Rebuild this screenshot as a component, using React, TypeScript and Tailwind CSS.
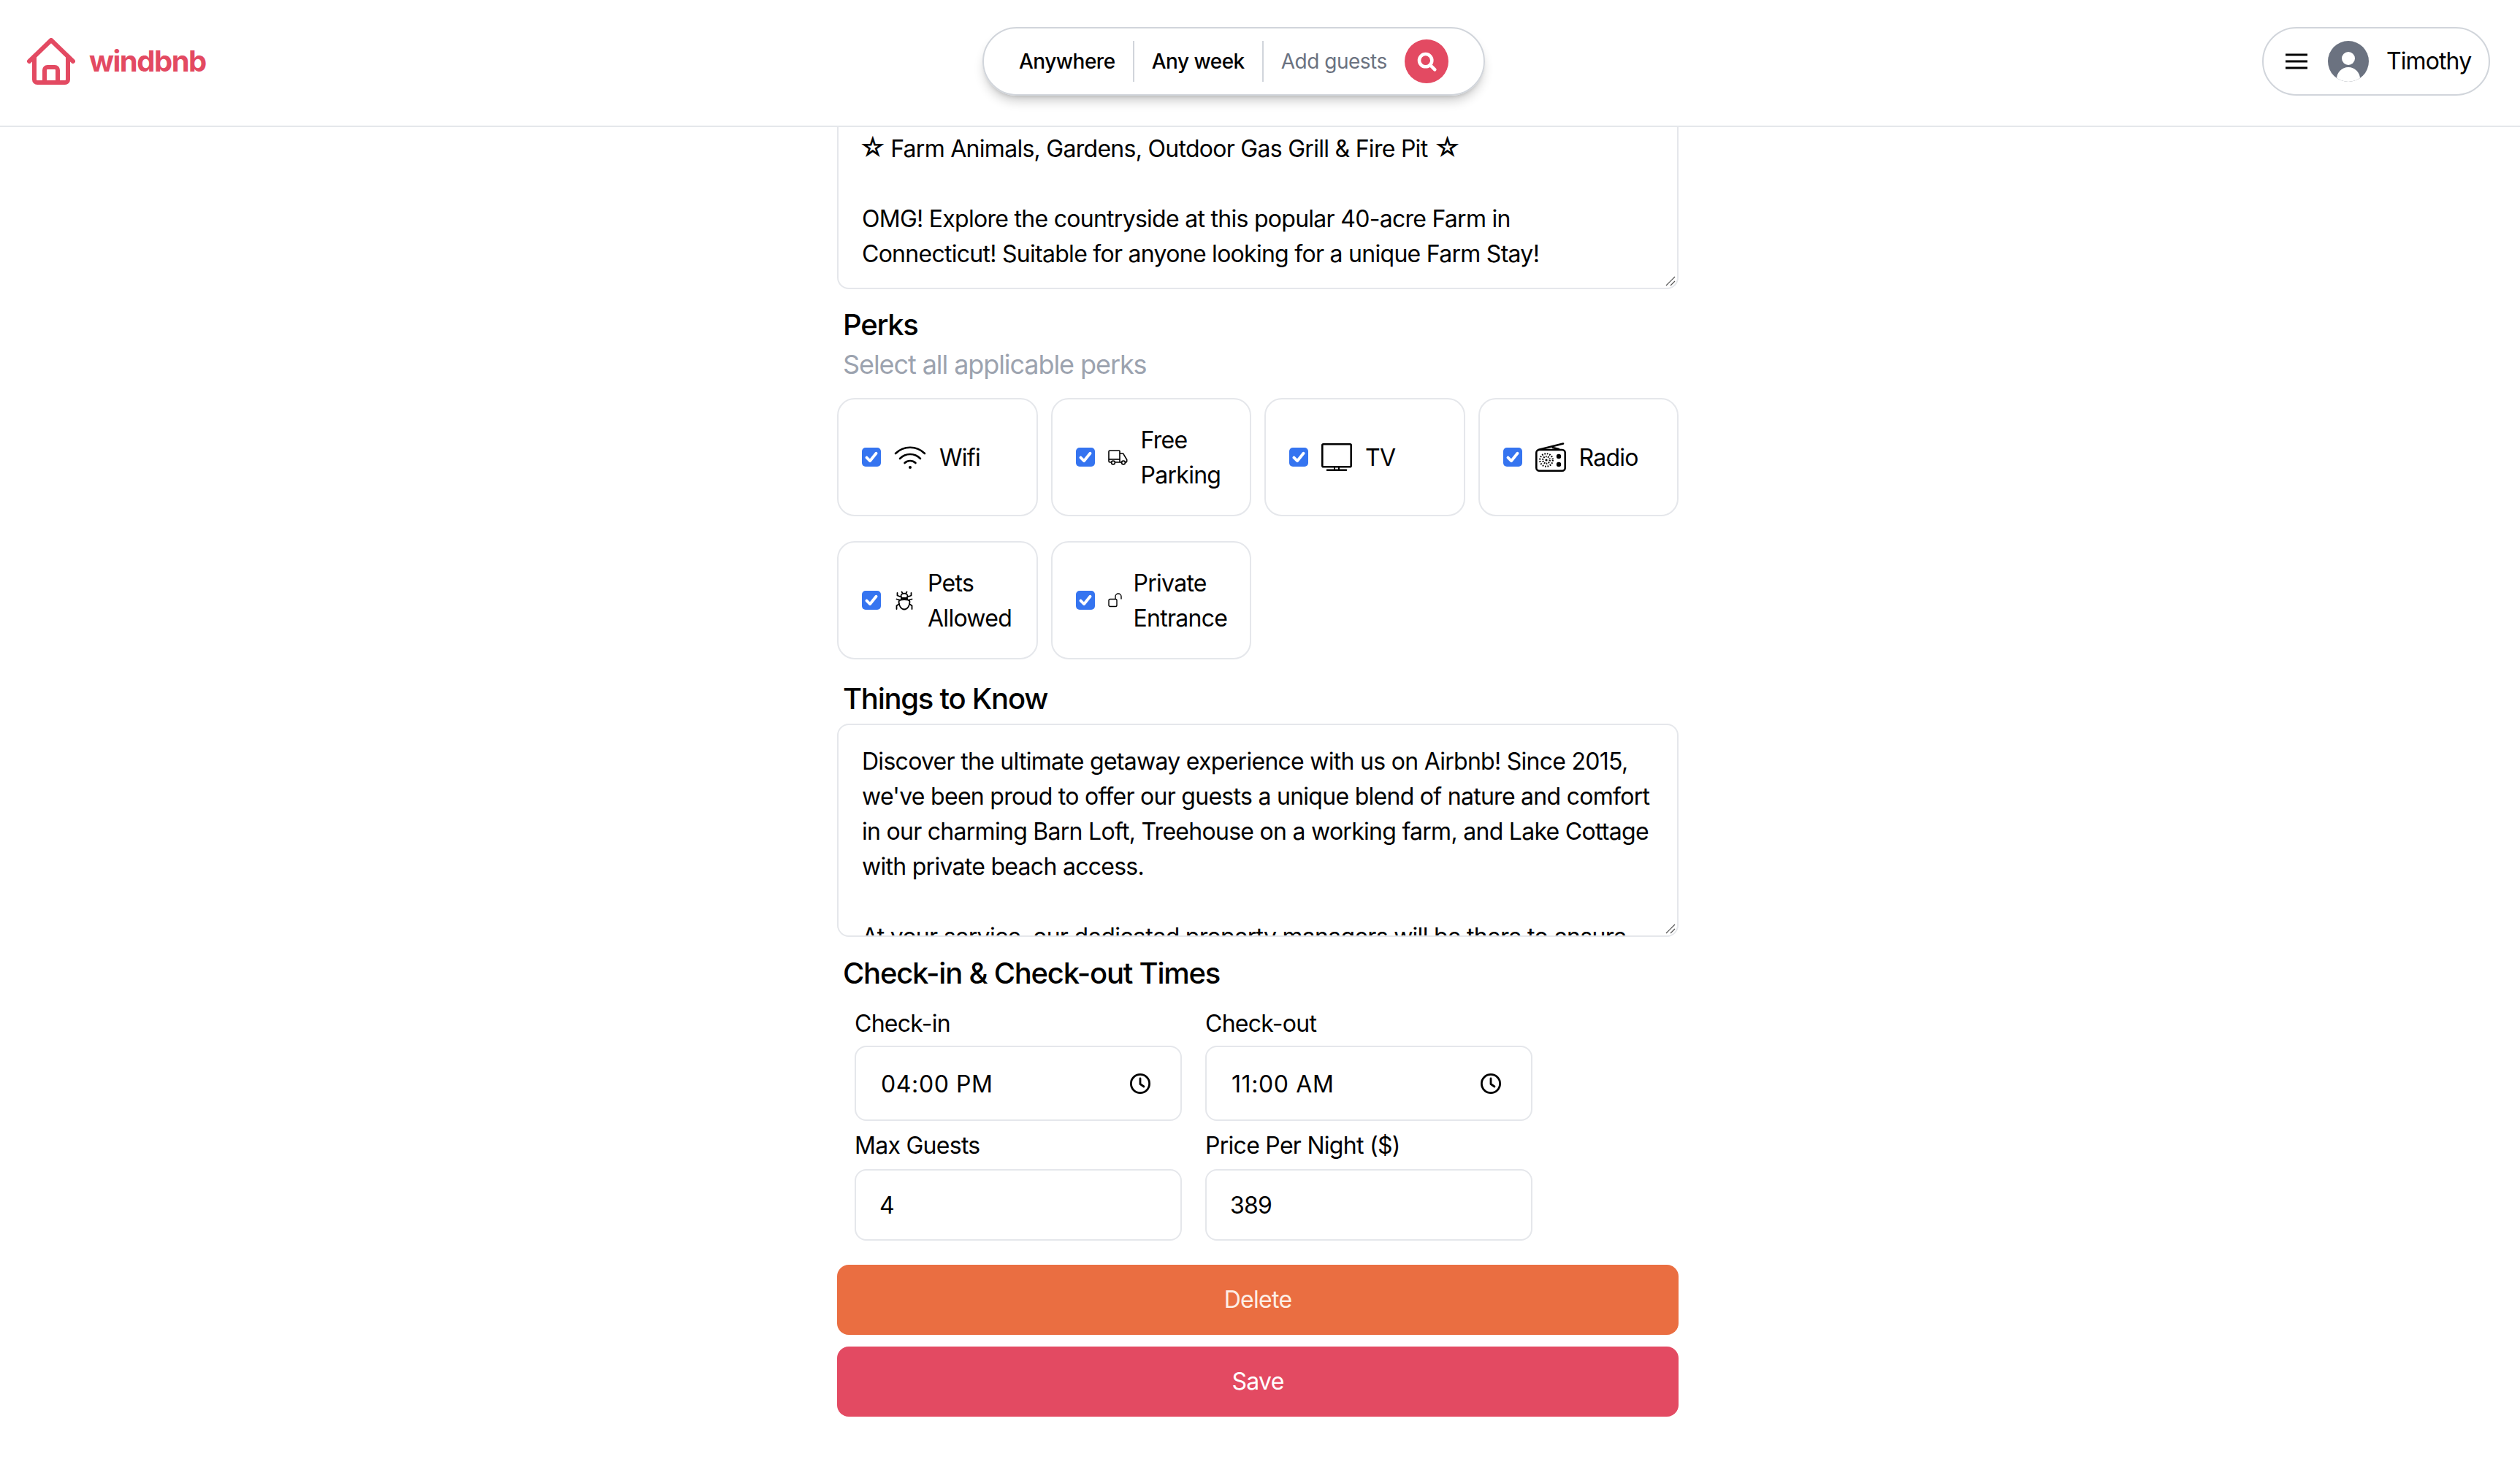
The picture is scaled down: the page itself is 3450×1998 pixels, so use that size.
const font = "font-['Inter',sans-serif]";

function HouseLogo() {
  return (
    <svg viewBox="0 0 66 64" className="w-[66px] h-[64px]" fill="none" stroke="#e34a62" strokeWidth="6" strokeLinecap="round" strokeLinejoin="round">
      <path d="M3 32 L33 3 L63 32" />
      <path d="M10 26 V57 a4 4 0 0 0 4 4 H52 a4 4 0 0 0 4 -4 V26" />
      <path d="M24 60 V44 a4 4 0 0 1 4 -4 H38 a4 4 0 0 1 4 4 V60" />
    </svg>
  );
}

function WifiIcon() {
  return (
    <svg viewBox="0 0 44 34" className="w-[44px] h-[34px] shrink-0" fill="none" stroke="black" strokeWidth="2.6" strokeLinecap="round">
      <path d="M2 12 C13 1 31 1 42 12" />
      <path d="M8 19 C16 11 28 11 36 19" />
      <path d="M14.5 25 C19 21 25 21 29.5 25" />
      <circle cx="22" cy="31" r="2" fill="black" stroke="none" />
    </svg>
  );
}

function TruckIcon() {
  return (
    <svg viewBox="0 0 27 21" className="w-[27px] h-[21px] shrink-0" fill="none" stroke="black" strokeWidth="1.6" strokeLinejoin="round">
      <path d="M4.5 17 H2.5 a1.5 1.5 0 0 1 -1.5 -1.5 V2.5 A1.5 1.5 0 0 1 2.5 1 H15 a1 1 0 0 1 1 1 V17 H9.5" />
      <path d="M16 5 H20 a1 1 0 0 1 1 .7 L25.7 13.5 V15.5 a1.5 1.5 0 0 1 -1.5 1.5 H23.5 M18.5 17 H16" />
      <path d="M1 13 H16" />
      <circle cx="7" cy="17.5" r="2.4" />
      <circle cx="21" cy="17.5" r="2.4" />
    </svg>
  );
}

function TvIcon() {
  return (
    <svg viewBox="0 0 42 38" className="w-[42px] h-[38px] shrink-0" fill="none" stroke="black" strokeWidth="2.6" strokeLinejoin="round">
      <rect x="1.3" y="1.3" width="39.4" height="31" rx="1.5" />
      <path d="M18 32 V36 M24 32 V36" strokeWidth="2" />
      <path d="M8 36.7 H34" strokeLinecap="round" />
    </svg>
  );
}

function RadioIcon() {
  return (
    <svg viewBox="0 0 42 40" className="w-[42px] h-[40px] shrink-0" fill="none" stroke="black" strokeWidth="2.6" strokeLinejoin="round">
      <rect x="1.3" y="10" width="39.4" height="28.7" rx="4" />
      <path d="M4 10 L38 1.5 M24 7 L32 9" strokeLinecap="round" />
      <circle cx="15" cy="24" r="8.8" strokeWidth="2.2" strokeDasharray="1.7 1.8" />
      <circle cx="15" cy="24" r="4.8" strokeWidth="2.2" strokeDasharray="1.6 1.4" />
      <circle cx="15" cy="24" r="1.6" fill="black" stroke="none" />
      <circle cx="32" cy="19" r="3.2" fill="black" stroke="none" />
      <circle cx="32" cy="30" r="3.2" fill="black" stroke="none" />
    </svg>
  );
}

function BugIcon() {
  return (
    <svg viewBox="0 0 24 27" className="w-[24px] h-[27px] shrink-0" fill="none" stroke="black" strokeWidth="1.8" strokeLinecap="round" strokeLinejoin="round">
      <path d="M4.5 15 C4.5 12.5 8 12 12 12 C16 12 19.5 12.5 19.5 15 C19.5 21 16 25.5 12 25.5 C8 25.5 4.5 21 4.5 15 Z" />
      <path d="M8 12 V10 H16 V12" />
      <ellipse cx="12" cy="7" rx="4.5" ry="3.4" />
      <path d="M8.5 1.5 L10 4 M15.5 1.5 L14 4" />
      <path d="M7.5 8.5 L2.5 6.5 V3 M16.5 8.5 L21.5 6.5 V3" />
      <path d="M5.5 12.5 L1.5 11.5 M18.5 12.5 L22.5 11.5" />
      <path d="M5 18 L1.5 20.5 V25 M19 18 L22.5 20.5 V25" />
    </svg>
  );
}

function LockIcon() {
  return (
    <svg viewBox="0 0 20 20" className="w-[20px] h-[20px] shrink-0" fill="none" stroke="black" strokeWidth="1.4" strokeLinecap="round" strokeLinejoin="round">
      <rect x="1" y="8.5" width="11" height="10" rx="1.8" />
      <path d="M10 8.5 V5 a4 4 0 0 1 8 0 V8" />
    </svg>
  );
}

function ClockIcon() {
  return (
    <svg viewBox="0 0 30 30" className="w-[30px] h-[30px]" fill="none" stroke="black" strokeWidth="2.8" strokeLinecap="round" strokeLinejoin="round">
      <circle cx="15" cy="15" r="12.6" />
      <path d="M15 8 V15.5 L20 19" />
    </svg>
  );
}

function Checkbox() {
  return (
    <span className="w-[26px] h-[26px] shrink-0 rounded-[5px] bg-[#3574f0] flex items-center justify-center">
      <svg viewBox="0 0 16 16" className="w-[26px] h-[26px]" fill="none" stroke="white" strokeWidth="2.4" strokeLinecap="round" strokeLinejoin="round">
        <path d="M4 8.4 L6.8 11.2 L12 4.8" />
      </svg>
    </span>
  );
}

function PerkCard({ icon, label, iconGap = 'ml-[18px]', gap }: { icon: React.ReactNode; label: string; iconGap?: string; gap: string }) {
  return (
    <label className="h-[162px] rounded-[24px] border-2 border-[#e5e7eb] pl-[32px] flex items-center">
      <Checkbox />
      <span className={`${iconGap} flex items-center`}>{icon}</span>
      <span className={`${gap} pt-[2px]`}>{label}</span>
    </label>
  );
}

function Field({ label, value, icon, box }: { label: string; value: string; icon?: boolean; box: string }) {
  return (
    <div className="w-[448px]">
      <div className="h-[48px]">{label}</div>
      <div className={`${box} rounded-[16px] border-2 border-[#e5e7eb] flex items-center justify-between`}>
        <span className="pt-[2px]">{value}</span>
        {icon && <ClockIcon />}
      </div>
    </div>
  );
}

function ResizeGrip() {
  return (
    <svg viewBox="0 0 16 16" className="absolute right-[2px] bottom-[2px] w-[16px] h-[16px]" stroke="#555" strokeWidth="1.2">
      <path d="M3 15 L15 3 M9 15 L15 9" />
    </svg>
  );
}

export default function App() {
  return (
    <div className={`${font} h-[1998px] w-[3450px] overflow-hidden bg-white text-black`}>
      <header className="h-[174px] border-b-2 border-[#e5e7eb] pl-[37px] pr-[41px] pb-[4px] flex items-center justify-between">
        <div className="flex items-center gap-[19px] w-[932px]">
          <HouseLogo />
          <span className="text-[40px] font-bold tracking-[-1.5px] text-[#e34a62]">windbnb</span>
        </div>
        <div className="h-[94px] w-[688px] rounded-full border-2 border-[#d1d5db] shadow-[0_10px_15px_-3px_rgba(0,0,0,0.2),0_4px_6px_-4px_rgba(0,0,0,0.2)] flex items-center pl-[48px] text-[28px] tracking-[-0.5px]">
          <span className="font-medium">Anywhere</span>
          <span className="mx-[24px] h-[56px] w-[2px] bg-[#d1d5db]" />
          <span className="font-medium">Any week</span>
          <span className="mx-[24px] h-[56px] w-[2px] bg-[#d1d5db]" />
          <span className="text-[#6b7280]">Add guests</span>
          <span className="ml-[24px] w-[60px] h-[60px] rounded-full bg-[#e34a62] flex items-center justify-center">
            <svg viewBox="0 0 24 24" className="w-[32px] h-[32px]" fill="none" stroke="white" strokeWidth="3.4" strokeLinecap="round">
              <circle cx="11" cy="11" r="6.5" />
              <path d="M16 16 L20.5 20.5" />
            </svg>
          </span>
        </div>
        <div className="w-[1000px] flex justify-end">
          <div className="h-[94px] w-[312px] rounded-full border-2 border-[#d1d5db] flex items-center pl-[30px]">
            <svg viewBox="0 0 30 24" className="w-[30px] h-[24px]" fill="none" stroke="black" strokeWidth="2.8">
              <path d="M0 3 H30 M0 12 H30 M0 21 H30" />
            </svg>
            <span className="ml-[28px] w-[56px] h-[56px] rounded-full bg-[#6b7280] relative overflow-hidden">
              <span className="absolute left-[19px] top-[15px] w-[18px] h-[18px] rounded-full bg-white" />
              <span className="absolute left-[12px] top-[36px] w-[32px] h-[32px] rounded-full bg-white" />
            </span>
            <span className="ml-[24px] text-[32px] tracking-[-0.9px]">Timothy</span>
          </div>
        </div>
      </header>

      <main className="w-[1152px] ml-[1146px] text-[32px] leading-[48px] tracking-[-0.72px]">
        <div className="relative h-[222px] rounded-b-[16px] border-2 border-t-0 border-[#e5e7eb] pl-[32px] pt-[6px]">
          <div><span className="text-[36px] leading-[36px] -ml-[4px] -mr-[2px]">☆</span> Farm Animals, Gardens, Outdoor Gas Grill &amp; Fire Pit <span className="text-[36px] leading-[36px]">☆</span></div>
          <div className="mt-[48px]">OMG! Explore the countryside at this popular 40-acre Farm in</div>
          <div>Connecticut! Suitable for anyone looking for a unique Farm Stay!</div>
          <ResizeGrip />
        </div>

        <h2 className="mt-[21px] pl-[8px] text-[40px] leading-[56px] font-medium tracking-[-1.25px]">Perks</h2>
        <p className="pl-[8px] text-[#9ca3af] text-[36px] leading-[52px] tracking-[-1.08px]">Select all applicable perks</p>

        <div className="mt-[20px] grid grid-cols-4 gap-x-[18px] gap-y-[34px]">
          <PerkCard icon={<WifiIcon />} label="Wifi" gap="ml-[18px]" />
          <PerkCard icon={<TruckIcon />} label="Free Parking" gap="ml-[18px]" />
          <PerkCard icon={<TvIcon />} label="TV" gap="ml-[18px]" />
          <PerkCard icon={<RadioIcon />} label="Radio" gap="ml-[18px]" />
          <PerkCard icon={<BugIcon />} label="Pets Allowed" iconGap="ml-[20px]" gap="ml-[20px]" />
          <PerkCard icon={<LockIcon />} label="Private Entrance" gap="ml-[15px]" />
        </div>

        <h2 className="mt-[26px] pl-[8px] text-[40px] leading-[56px] font-medium tracking-[-1.25px]">Things to Know</h2>
        <div className="relative mt-[6px] h-[292px] overflow-hidden rounded-[16px] border-2 border-[#e5e7eb] pl-[32px] pr-[24px] pt-[26px]">
          <div>Discover the ultimate getaway experience with us on Airbnb! Since 2015, we've been proud to offer our guests a unique blend of nature and comfort in our charming Barn Loft, Treehouse on a working farm, and Lake Cottage with private beach access.</div>
          <div className="mt-[48px]">At your service, our dedicated property managers will be there to ensure</div>
          <ResizeGrip />
        </div>

        <h2 className="mt-[22px] pl-[8px] text-[40px] leading-[56px] font-medium tracking-[-1.25px]">Check-in &amp; Check-out Times</h2>
        <div className="mt-[17px] ml-[24px] flex gap-[32px]">
          <Field label="Check-in" value="04:00 PM" icon box="mt-[6px] h-[103px] pl-[34px] pr-[40px] tracking-[0.6px]" />
          <Field label="Check-out" value="11:00 AM" icon box="mt-[6px] h-[103px] pl-[34px] pr-[40px] tracking-[0.6px]" />
        </div>
        <div className="mt-[10px] ml-[24px] flex gap-[32px]">
          <Field label="Max Guests" value="4" box="mt-[8px] h-[98px] pl-[32px] pr-[32px]" />
          <Field label="Price Per Night ($)" value="389" box="mt-[8px] h-[98px] pl-[32px] pr-[32px]" />
        </div>
        <button className="mt-[33px] block w-full h-[96px] rounded-[16px] bg-[#ea6e41] text-[#fdeee6]">Delete</button>
        <button className="mt-[16px] block w-full h-[96px] rounded-[16px] bg-[#e34a62] text-white">Save</button>
      </main>
    </div>
  );
}
